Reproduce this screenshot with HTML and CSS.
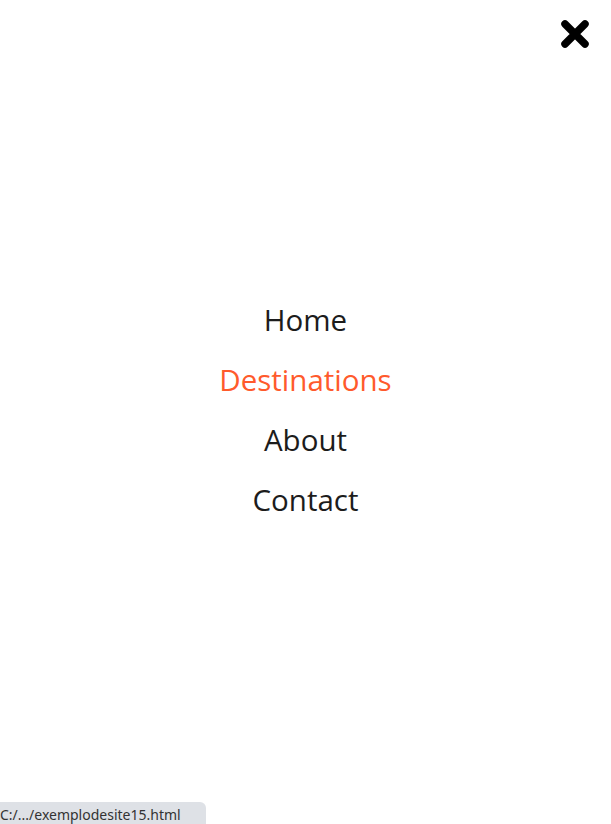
FILE: index.html
```html
<!DOCTYPE html>
<html lang="en">
<head>
<meta charset="utf-8">
<title>Menu</title>
<link rel="stylesheet" href="styles.css">
</head>
<body>
<div class="overlay">
  <button class="close" aria-label="Close">
    <svg width="30" height="30" viewBox="0 0 30 30"><path d="M5 5 L25 25 M25 5 L5 25" stroke="#000" stroke-width="7.5" stroke-linecap="round" fill="none"/></svg>
  </button>
  <nav class="menu">
    <a href="#">Home</a>
    <a href="#" class="active">Destinations</a>
    <a href="#">About</a>
    <a href="#">Contact</a>
  </nav>
</div>
<div class="status">C:/.../exemplodesite15.html</div>
</body>
</html>
```
FILE: styles.css
```css
html, body { margin: 0; padding: 0; background: #fff; }
.overlay {
  height: 824px;
  display: flex;
  align-items: center;
  justify-content: center;
  position: relative;
}
.close {
  position: absolute;
  top: 19px;
  right: 21px;
  background: none;
  border: 0;
  padding: 0;
  width: 30px;
  height: 30px;
}
.close svg { display: block; }
.menu {
  display: flex;
  flex-direction: column;
  align-items: center;
  font-family: "Open Sans", sans-serif;
  font-size: 29.5px;
  line-height: 60px;
  margin-top: -4px;
}
.menu a { color: #1c1c1c; text-decoration: none; }
.menu a.active { color: #ff5a2c; }
.status {
  position: fixed;
  left: 0;
  bottom: 0;
  width: 206px;
  height: 22px;
  box-sizing: border-box;
  padding: 2px 0 0 0;
  background: #dee1e6;
  border-top-right-radius: 6px;
  font-family: "Noto Sans", "Open Sans", sans-serif;
  font-size: 14px;
  line-height: 22px;
  color: #333;
  white-space: nowrap;
  overflow: hidden;
}
```
